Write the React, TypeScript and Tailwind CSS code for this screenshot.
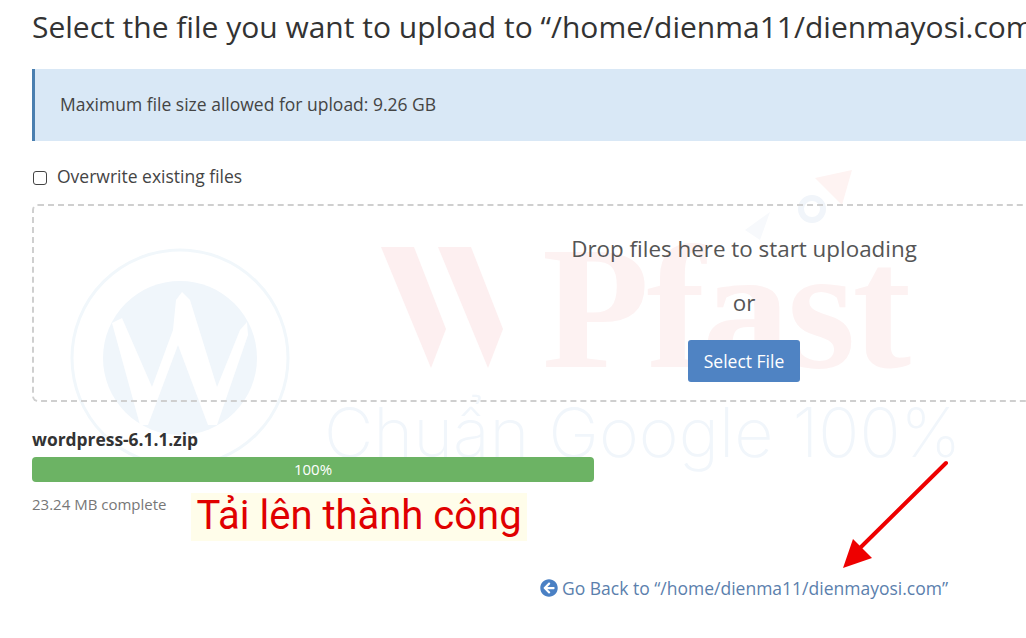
import { FaArrowCircleLeft } from "react-icons/fa";

// Faint logo printed behind the page
const Watermark = () => (
  <div className="absolute inset-0 pointer-events-none select-none">
    <svg className="absolute left-0 top-0" width="1026" height="638" viewBox="0 0 1026 638" fill="none">
      <circle cx="180" cy="358" r="108" stroke="#f1f7fb" strokeWidth="3" />
      <circle cx="180" cy="358" r="77" fill="#f0f6fb" />
      <path d="M112 323 L122 318 L152 387 L173 330 L176 300 L182 292 L190 300 L217 387 L240 330 L247 322 L248 335 L217 425 L208 425 L178 345 L148 425 L140 425 Z" fill="#ffffff" />
      <path d="M381 247 L414 247 L446 329 L431 368 Z" fill="#fdeff0" />
      <path d="M438 247 L471 247 L503 329 L488 368 Z" fill="#fdeff0" />
      <path d="M815 178 L852 170 L842 205 Z" fill="#fef3f2" />
      <circle cx="812" cy="209" r="11" stroke="#f1f5fa" strokeWidth="6" />
      <path d="M745 230 L770 212 L760 240 Z" fill="#f7f9fc" />
    </svg>
    <span className="absolute left-[542px] top-[208px] font-['Liberation_Serif',serif] font-bold text-[176px] leading-[200px] tracking-[-3px] text-[#fdf2f2]">Pfast</span>
    <span className="absolute left-[324px] top-[392px] font-['Inter',sans-serif] font-extralight text-[68px] leading-[80px] text-[#f1f6fb] whitespace-nowrap">Chuẩn Google 100%</span>
  </div>
);

const RedArrow = () => (
  <svg className="absolute left-[835px] top-[455px]" width="120" height="120" viewBox="0 0 120 120" fill="none">
    <path d="M111 8 L25 93" stroke="#ee0000" strokeWidth="4" strokeLinecap="round" />
    <path d="M8 113 L18 84 L37 103 Z" fill="#ee0000" />
  </svg>
);

export default function App() {
  return (
    <div className="relative w-[1026px] h-[638px] overflow-hidden bg-white font-['Open_Sans',sans-serif] text-[#333]">
      <Watermark />
      <div className="relative w-[1456px] pl-8">
        <h1 className="pt-[7px] h-[69px] text-[30px] leading-[40px] font-normal whitespace-nowrap">
          Select the file you want to upload to “/home/dienma11/dienmayosi.com”
        </h1>

        <div className="flex items-center h-[72px] pl-[25px] pb-[2px] border-l-[3px] border-[#4a7fb0] bg-[#d9e8f6] text-[17.5px] text-[#444]">
          Maximum file size allowed for upload: 9.26 GB
        </div>

        <label className="flex items-center mt-[24px] h-[22px] text-[17.5px] text-[#444]">
          <span className="block w-[14px] h-[14px] mt-[4px] ml-px mr-[10px] border border-[#444] rounded-[3px] bg-white" />
          Overwrite existing files
        </label>

        <div className="flex flex-col items-center mt-[17px] h-[198px] pt-[28px] border-2 border-dashed border-[#cfcfcf] rounded-[6px] text-[#555]">
          <div className="text-[22.4px] leading-[30px]">Drop files here to start uploading</div>
          <div className="mt-[24px] text-[22.4px] leading-[30px]">or</div>
          <button className="mt-[22px] w-[112px] h-[42px] rounded-[3px] bg-[#4f83c3] text-white text-[17.5px]">Select File</button>
        </div>

        <div className="mt-[26px] text-[17.4px] leading-[22px] font-bold">wordpress-6.1.1.zip</div>
        <div className="flex items-center justify-center mt-[7px] w-[562px] h-[25px] rounded-[4px] bg-[#6cb364] text-white text-[15px]">100%</div>

        <div className="flex items-start mt-[11px] h-[48px]">
          <span className="w-[159px] pt-[1px] text-[15px] leading-[20px] text-[#777]">23.24 MB complete</span>
          <span className="flex items-center justify-center w-[336px] h-[48px] pb-[2px] bg-[#fffdea] font-['Roboto',sans-serif] text-[40px] text-[#e00000] whitespace-nowrap">Tải lên thành công</span>
        </div>

        <div className="flex items-center gap-[4px] mt-[35px] ml-[508px] text-[17.5px] leading-[24px] text-[#5b80ad] whitespace-nowrap">
          <FaArrowCircleLeft className="text-[18px] text-[#4a80c4]" />
          Go Back to “/home/dienma11/dienmayosi.com”
        </div>
      </div>
      <RedArrow />
    </div>
  );
}
